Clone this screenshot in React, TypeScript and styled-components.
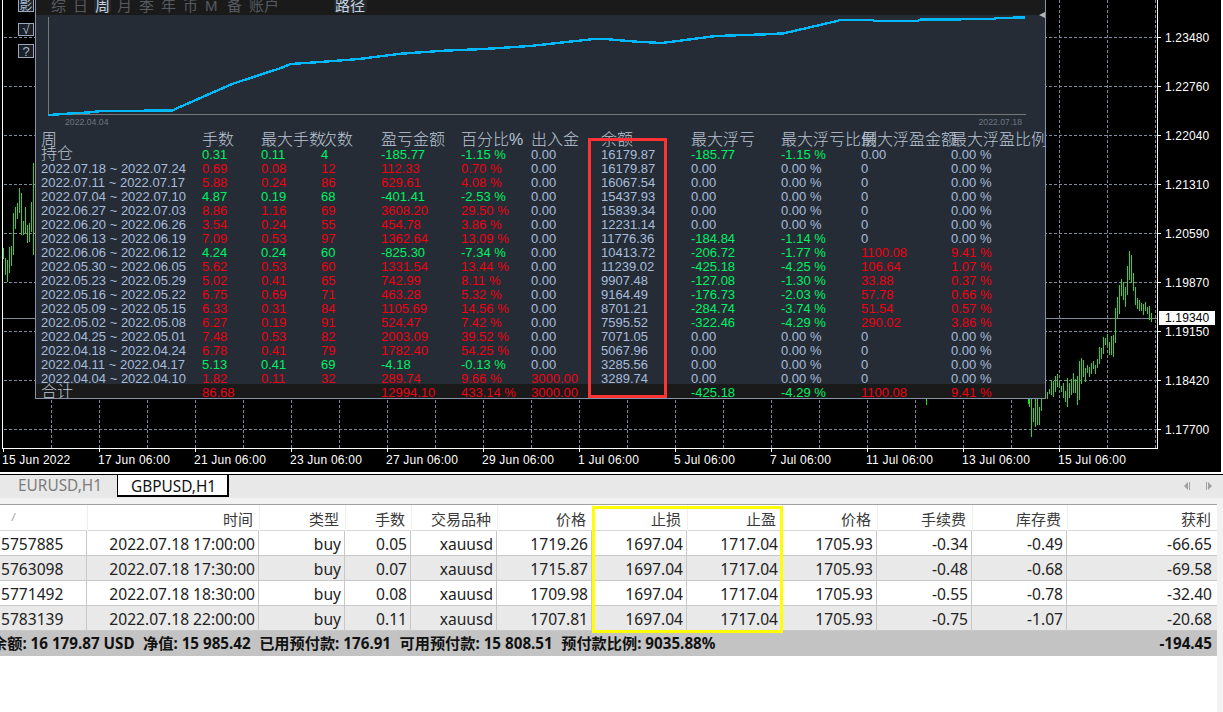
import React from 'react';
import styled, { createGlobalStyle } from 'styled-components';

const CJK = `"Liberation Sans", "Noto Sans CJK SC", sans-serif`;
const UI = `"Noto Sans", "Noto Sans CJK SC", sans-serif`;

const Global = createGlobalStyle`
  html, body { margin: 0; padding: 0; background: #fff; overflow: hidden; }
  * { box-sizing: border-box; }
`;

const Page = styled.div`
  width: 1223px;
  height: 712px;
  overflow: hidden;
  display: flex;
  flex-direction: column;
  background: #fff;
`;

/* ---------- chart ---------- */
const ChartFrame = styled.section`
  position: relative;
  width: 1221px;
  height: 472px;
  flex: none;
  background: #000;
  overflow: hidden;
  display: grid;
  grid-template-columns: 1157px 64px;
  grid-template-rows: 448px 24px;
  font-family: "Liberation Sans", sans-serif;
  color: #fff;
`;
const ChartCanvas = styled.svg`
  position: absolute;
  inset: 0;
  display: block;
`;
const PriceAxis = styled.div`
  grid-column: 2;
  grid-row: 1;
  position: relative;
  display: flex;
  flex-direction: column;
  padding: 14px 0 0 8px;
`;
const PriceLabel = styled.span`
  height: 49px;
  line-height: 49px;
  font-size: 12px;
  letter-spacing: 0.15px;
`;
const PriceTag = styled.span`
  position: absolute;
  left: 2px;
  top: 311px;
  width: 56px;
  height: 14px;
  padding-left: 6px;
  line-height: 14px;
  font-size: 12px;
  letter-spacing: 0.15px;
  background: #fff;
  color: #000;
`;
const TimeAxis = styled.div`
  grid-column: 1 / 3;
  grid-row: 2;
  position: relative;
  display: flex;
  padding: 5px 0 0 2px;
`;
const TimeLabel = styled.span`
  flex: none;
  width: 96px;
  line-height: 15px;
  font-size: 12px;
  letter-spacing: 0.22px;
  white-space: nowrap;
`;
const ToolButton = styled.span<{ $top: number; $height: number }>`
  position: absolute;
  left: 18px;
  top: ${p => p.$top}px;
  width: 16px;
  height: ${p => p.$height}px;
  border: 1px solid #9aa8bc;
  display: flex;
  align-items: center;
  justify-content: center;
  overflow: hidden;
  font: 13px/13px ${CJK};
  color: #a9b8cc;
  background: #1c2026;
`;

/* ---------- statistics panel ---------- */
const Panel = styled.div`
  position: absolute;
  left: 35px;
  top: 0;
  width: 1011px;
  height: 399px;
  background: #252c35;
  border: 1px solid #8593a8;
  border-top: 0;
  overflow: hidden;
  font-family: "Liberation Sans", sans-serif;
`;
const PeriodBar = styled.div`
  height: 15px;
  background: #1a1a1a;
  display: flex;
  padding-left: 14px;
  overflow: hidden;
`;
const PeriodTab = styled.span<{ $active?: boolean; $wide?: boolean; $gap?: number }>`
  flex: none;
  width: ${p => (p.$wide ? 33 : 17)}px;
  margin-left: ${p => p.$gap ?? 0}px;
  margin-right: 5px;
  height: 13px;
  padding-left: 1px;
  overflow: hidden;
  font: 15px/11px ${CJK};
  white-space: nowrap;
  color: ${p => (p.$active ? '#c6d0de' : '#565a60')};
  background: ${p => (p.$active ? '#23282f' : 'transparent')};
  border-radius: 0 0 3px 3px;
`;
const Graph = styled.div`
  height: 118px;
`;
const GraphSvg = styled.svg`
  display: block;
`;
const GraphDates = styled.div`
  height: 16px;
  display: flex;
  justify-content: space-between;
  padding: 0 23px 0 29px;
  font-size: 8.7px;
  line-height: 12px;
  color: #6d7580;
`;
const StatRow = styled.div<{ $total?: boolean }>`
  display: grid;
  grid-template-columns: 161px 59px 60px 60px 80px 70px 70px 90px 90px 80px 90px 90px;
  height: 14px;
  padding-left: 5px;
  ${p => p.$total && 'background: #1a1a1a; margin-top: -1px; padding-top: 1px; height: 15px;'}
`;
const StatCell = styled.span<{ $tone?: 'up' | 'down' | 'plain' }>`
  white-space: nowrap;
  font-size: 13px;
  line-height: 16px;
  color: ${p => (p.$tone === 'up' ? '#00f064' : p.$tone === 'down' ? '#ee0012' : '#a8bcdc')};
`;
const HeadCell = styled.span`
  white-space: nowrap;
  font: 300 16px/14px ${CJK};
  color: #bcc7d6;
`;
const RedFrame = styled.div`
  position: absolute;
  left: 552px;
  top: 138px;
  width: 79px;
  height: 260px;
  border: 3px solid #ff3333;
`;
const ResizeGrip = styled.span`
  position: absolute;
  right: 0;
  top: 12px;
  width: 6px;
  height: 6px;
  background: #b5b5b5;
  clip-path: polygon(100% 0, 100% 100%, 0 50%);
`;

/* ---------- terminal ---------- */
const TabBar = styled.div`
  margin-top: 2px;
  height: 24px;
  flex: none;
  border-top: 1px solid #000;
  background: #e8e8e8;
  display: flex;
  align-items: flex-start;
  font: 15.4px/22px ${UI};
  position: relative;
`;
const Tab = styled.div<{ $active?: boolean }>`
  height: ${p => (p.$active ? 23 : 22)}px;
  margin-top: ${p => (p.$active ? -1 : 0)}px;
  padding: ${p => (p.$active ? '1px 0 0 13px' : '0 0 0 18px')};
  width: ${p => (p.$active ? 112 : 117)}px;
  color: ${p => (p.$active ? '#111' : '#7c7c7c')};
  background: ${p => (p.$active ? '#fff' : 'transparent')};
  white-space: nowrap;
  ${p => p.$active && 'border: 1px solid #000; border-right-width: 2px; border-bottom-width: 2px;'}
`;
const TabArrows = styled.svg`
  position: absolute;
  right: 9px;
  top: 5px;
`;
const TerminalBody = styled.div`
  flex: 1;
  background: #f2f2f2;
  padding: 6px 6px 0 0;
  display: flex;
`;
const TradeTable = styled.div`
  position: relative;
  width: 1217px;
  background: #fff;
  border-top: 1px solid #a0a0a0;
  overflow: hidden;
  font-family: ${UI};
  color: #222;
`;
const columns = '87px 172px 86px 66px 86px 95px 95px 95px 95px 95px 95px 150px';
const TradeHead = styled.div`
  display: grid;
  grid-template-columns: ${columns};
  height: 26px;
  border-bottom: 1px solid #d6d6d6;
`;
const TradeHeadCell = styled.span`
  text-align: right;
  padding-right: 6px;
  font: 15px/27px "Noto Sans CJK SC", sans-serif;
  color: #3a3a3a;
  border-left: 1px solid #efefef;
  overflow: hidden;
`;
const SortMark = styled.span`
  padding-left: 12px;
  font: italic 10px/26px "Liberation Sans", sans-serif;
  color: #888;
`;
const TradeRow = styled.div<{ $odd: boolean }>`
  display: grid;
  grid-template-columns: ${columns};
  height: 25px;
  background: ${p => (p.$odd ? '#e9e9e9' : '#fff')};
  border-bottom: 1px solid #c8c8c8;
`;
const TradeCell = styled.span<{ $first?: boolean }>`
  text-align: ${p => (p.$first ? 'left' : 'right')};
  padding: ${p => (p.$first ? '0 0 0 1px' : '0 3px 0 0')};
  font-size: 15.6px;
  line-height: 26px;
  border-right: 1px solid #c8c8c8;
  white-space: nowrap;
  overflow: hidden;
`;
const LastTradeCell = styled(TradeCell)`
  padding-right: 5px;
  border-right: 0;
`;
const Summary = styled.div`
  height: 25px;
  background: #c3c3c3;
  display: flex;
  align-items: center;
  font: 700 15.2px/25px ${UI};
  color: #111;
  white-space: nowrap;
  overflow: hidden;
  padding-right: 5px;
`;
const SummaryItems = styled.div`
  flex: 1;
  display: flex;
  gap: 8.5px;
  margin-left: -8px;
`;
const YellowFrame = styled.div`
  position: absolute;
  left: 592px;
  top: 1px;
  width: 191px;
  height: 127px;
  border: 3px solid #ffff00;
`;

/* ---------- data ---------- */
const prices = ['1.23480', '1.22760', '1.22040', '1.21310', '1.20590', '1.19870', '1.19150', '1.18420', '1.17700'];
const times = ['15 Jun 2022', '17 Jun 06:00', '21 Jun 06:00', '23 Jun 06:00', '27 Jun 06:00', '29 Jun 06:00', '1 Jul 06:00', '5 Jul 06:00', '7 Jul 06:00', '11 Jul 06:00', '13 Jul 06:00', '15 Jul 06:00'];

const leftBars: [number, number, number][] = [
  [3, 248, 259], [5, 258, 275], [7, 260, 282], [9, 247, 273], [11, 246, 266], [13, 213, 255], [15, 207, 229], [17, 203, 219], [19, 188, 213], [21, 193, 235], [23, 221, 235], [25, 207, 233], [27, 225, 243], [29, 223, 242], [31, 202, 232], [33, 163, 255],
];
const rightRaw: [number, number, number][] = [
  [4, 475, 590], [10, 505, 545], [16, 475, 560], [22, 475, 555], [28, 500, 555], [34, 475, 512], [52, 455, 478], [58, 447, 462], [64, 423, 465], [70, 423, 470], [76, 408, 455], [82, 402, 440], [88, 425, 445], [94, 437, 455], [100, 430, 473], [106, 452, 485], [112, 415, 500], [118, 430, 473], [124, 418, 465], [130, 400, 460], [136, 418, 458], [142, 407, 495], [148, 362, 480], [154, 354, 432], [160, 360, 410], [166, 385, 425], [172, 375, 400], [178, 382, 410], [184, 368, 402], [190, 363, 387], [196, 375, 402], [202, 358, 385], [208, 320, 372], [214, 325, 358], [220, 290, 342], [226, 295, 315], [232, 282, 315], [238, 305, 345], [244, 288, 345], [250, 285, 350], [256, 205, 308], [262, 170, 235], [268, 135, 222], [274, 118, 168], [280, 127, 180], [286, 140, 202], [292, 78, 165], [298, 33, 120], [304, 45, 128], [310, 98, 152], [316, 140, 195], [322, 175, 207], [328, 180, 212], [334, 190, 214], [340, 192, 225], [346, 186, 212], [352, 200, 222], [358, 197, 240], [364, 220, 246],
];
const rightBars: [number, number, number][] = rightRaw.map(([x, a, b]) => [1030 + Math.floor(x / 3), 240 + Math.round(a / 3), 240 + Math.round(b / 3)]);
const extraBars: [number, number, number][] = [[926, 398, 405], [1028, 398, 404], [1029, 398, 407]];

const graphPoints: [number, number][] = [
  [48, 115], [56, 114.5], [70, 113.5], [88, 112.5], [102, 111], [172, 110.5], [232, 84], [280, 68.3], [291, 64], [316, 62.3], [359, 59], [401, 53.7], [444, 50.7], [484, 49], [530, 46], [576, 41], [594, 39], [605, 39], [637, 41.7], [662, 43], [716, 36], [766, 34.3], [784, 33.3], [837, 21], [840, 20], [872, 20], [874, 20.7], [918, 20.7], [920, 19.7], [994, 19], [996, 18], [1025, 17.5],
];

type Tone = 'up' | 'down';
interface WeekRow {
  period: string; tone: Tone; lots: string; maxLots: string; count: string; pnl: string; pct: string; flow?: string; balance: string; loss?: string; lossPct?: string; gain?: string; gainPct?: string;
}
const weeks: WeekRow[] = [
  { period: '2022.07.18 ~ 2022.07.24', tone: 'down', lots: '0.69', maxLots: '0.08', count: '12', pnl: '112.33', pct: '0.70 %', balance: '16179.87' },
  { period: '2022.07.11 ~ 2022.07.17', tone: 'down', lots: '5.88', maxLots: '0.24', count: '86', pnl: '629.61', pct: '4.08 %', balance: '16067.54' },
  { period: '2022.07.04 ~ 2022.07.10', tone: 'up', lots: '4.87', maxLots: '0.19', count: '68', pnl: '-401.41', pct: '-2.53 %', balance: '15437.93' },
  { period: '2022.06.27 ~ 2022.07.03', tone: 'down', lots: '8.86', maxLots: '1.16', count: '69', pnl: '3608.20', pct: '29.50 %', balance: '15839.34' },
  { period: '2022.06.20 ~ 2022.06.26', tone: 'down', lots: '3.54', maxLots: '0.24', count: '55', pnl: '454.78', pct: '3.86 %', balance: '12231.14' },
  { period: '2022.06.13 ~ 2022.06.19', tone: 'down', lots: '7.09', maxLots: '0.53', count: '97', pnl: '1362.64', pct: '13.09 %', balance: '11776.36', loss: '-184.84', lossPct: '-1.14 %' },
  { period: '2022.06.06 ~ 2022.06.12', tone: 'up', lots: '4.24', maxLots: '0.24', count: '60', pnl: '-825.30', pct: '-7.34 %', balance: '10413.72', loss: '-206.72', lossPct: '-1.77 %', gain: '1100.08', gainPct: '9.41 %' },
  { period: '2022.05.30 ~ 2022.06.05', tone: 'down', lots: '5.62', maxLots: '0.53', count: '60', pnl: '1331.54', pct: '13.44 %', balance: '11239.02', loss: '-425.18', lossPct: '-4.25 %', gain: '106.64', gainPct: '1.07 %' },
  { period: '2022.05.23 ~ 2022.05.29', tone: 'down', lots: '5.02', maxLots: '0.41', count: '65', pnl: '742.99', pct: '8.11 %', balance: '9907.48', loss: '-127.08', lossPct: '-1.30 %', gain: '33.88', gainPct: '0.37 %' },
  { period: '2022.05.16 ~ 2022.05.22', tone: 'down', lots: '6.75', maxLots: '0.69', count: '71', pnl: '463.28', pct: '5.32 %', balance: '9164.49', loss: '-176.73', lossPct: '-2.03 %', gain: '57.78', gainPct: '0.66 %' },
  { period: '2022.05.09 ~ 2022.05.15', tone: 'down', lots: '6.33', maxLots: '0.31', count: '84', pnl: '1105.69', pct: '14.56 %', balance: '8701.21', loss: '-284.74', lossPct: '-3.74 %', gain: '51.54', gainPct: '0.57 %' },
  { period: '2022.05.02 ~ 2022.05.08', tone: 'down', lots: '6.27', maxLots: '0.19', count: '91', pnl: '524.47', pct: '7.42 %', balance: '7595.52', loss: '-322.46', lossPct: '-4.29 %', gain: '290.02', gainPct: '3.86 %' },
  { period: '2022.04.25 ~ 2022.05.01', tone: 'down', lots: '7.48', maxLots: '0.53', count: '82', pnl: '2003.09', pct: '39.52 %', balance: '7071.05' },
  { period: '2022.04.18 ~ 2022.04.24', tone: 'down', lots: '6.78', maxLots: '0.41', count: '79', pnl: '1782.40', pct: '54.25 %', balance: '5067.96' },
  { period: '2022.04.11 ~ 2022.04.17', tone: 'up', lots: '5.13', maxLots: '0.41', count: '69', pnl: '-4.18', pct: '-0.13 %', balance: '3285.56' },
  { period: '2022.04.04 ~ 2022.04.10', tone: 'down', lots: '1.82', maxLots: '0.11', count: '32', pnl: '289.74', pct: '9.66 %', flow: '3000.00', balance: '3289.74' },
];

const statHeads = ['周', '手数', '最大手数', '次数', '盈亏金额', '百分比%', '出入金', '余额', '最大浮亏', '最大浮亏比例', '最大浮盈金额', '最大浮盈比例'];

const tradeHeads = ['时间', '类型', '手数', '交易品种', '价格', '止损', '止盈', '价格', '手续费', '库存费', '获利'];
const trades = [
  ['5757885', '2022.07.18 17:00:00', 'buy', '0.05', 'xauusd', '1719.26', '1697.04', '1717.04', '1705.93', '-0.34', '-0.49', '-66.65'],
  ['5763098', '2022.07.18 17:30:00', 'buy', '0.07', 'xauusd', '1715.87', '1697.04', '1717.04', '1705.93', '-0.48', '-0.68', '-69.58'],
  ['5771492', '2022.07.18 18:30:00', 'buy', '0.08', 'xauusd', '1709.98', '1697.04', '1717.04', '1705.93', '-0.55', '-0.78', '-32.40'],
  ['5783139', '2022.07.18 22:00:00', 'buy', '0.11', 'xauusd', '1707.81', '1697.04', '1717.04', '1705.93', '-0.75', '-1.07', '-20.68'],
];
const summary = ['余额: 16 179.87 USD', '净值: 15 985.42', '已用预付款: 176.91', '可用预付款: 15 808.51', '预付款比例: 9035.88%'];

const periodTabs = ['综', '日', '周', '月', '季', '年', '币', 'M', '备'];

function ChartDrawing() {
  const hLines = prices.map((_, i) => 37 + i * 49);
  const vLines = Array.from({ length: 24 }, (_, i) => 51 + i * 48);
  const ticks = times.map((_, i) => 3 + i * 96);
  const bars = [...leftBars, ...rightBars, ...extraBars];
  return (
    <ChartCanvas width={1221} height={472} shapeRendering="crispEdges">
      <g stroke="#7f8b9b" strokeWidth="1" strokeDasharray="3 2">
        {hLines.map(y => <line key={y} x1={4} x2={1157} y1={y + 0.5} y2={y + 0.5} />)}
        {vLines.map(x => <line key={x} x1={x + 0.5} x2={x + 0.5} y1={0} y2={448} />)}
      </g>
      <line x1={3} x2={1157} y1={318.5} y2={318.5} stroke="#7f8b9b" />
      <g stroke="#22dd22" strokeWidth="1">
        {bars.map(([x, a, b], i) => <line key={i} x1={x + 0.5} x2={x + 0.5} y1={a} y2={b} />)}
      </g>
      <g stroke="#fff" strokeWidth="1">
        <line x1={2.5} x2={2.5} y1={0} y2={449} />
        <line x1={1157.5} x2={1157.5} y1={0} y2={449} />
        <line x1={2} x2={1158} y1={448.5} y2={448.5} />
        {hLines.map(y => <line key={y} x1={1158} x2={1161} y1={y + 0.5} y2={y + 0.5} />)}
        {ticks.map(x => <line key={x} x1={x + 0.5} x2={x + 0.5} y1={449} y2={452} />)}
      </g>
    </ChartCanvas>
  );
}

function EquityGraph() {
  return (
    <GraphSvg width={1009} height={101} shapeRendering="crispEdges">
      <path d="M12.5 2V99.5H989.5" fill="none" stroke="#777" />
      <polyline
        points={graphPoints.map(([x, y]) => `${x - 36},${y - 15}`).join(' ')}
        fill="none"
        stroke="#00b8fa"
        strokeWidth="2.4"
      />
    </GraphSvg>
  );
}

function StatisticsPanel() {
  return (
    <Panel>
      <PeriodBar>
        {periodTabs.map(t => <PeriodTab key={t} $active={t === '周'}>{t}</PeriodTab>)}
        <PeriodTab $wide>账户</PeriodTab>
        <PeriodTab $wide $active $gap={48}>路径</PeriodTab>
      </PeriodBar>
      <Graph>
        <EquityGraph />
        <GraphDates><span>2022.04.04</span><span>2022.07.18</span></GraphDates>
      </Graph>
      <StatRow>
        {statHeads.map(h => <HeadCell key={h}>{h}</HeadCell>)}
      </StatRow>
      <StatRow>
        <HeadCell>持仓</HeadCell>
        <StatCell $tone="up">0.31</StatCell>
        <StatCell $tone="up">0.11</StatCell>
        <StatCell $tone="up">4</StatCell>
        <StatCell $tone="up">-185.77</StatCell>
        <StatCell $tone="up">-1.15 %</StatCell>
        <StatCell>0.00</StatCell>
        <StatCell>16179.87</StatCell>
        <StatCell $tone="up">-185.77</StatCell>
        <StatCell $tone="up">-1.15 %</StatCell>
        <StatCell>0.00</StatCell>
        <StatCell>0.00 %</StatCell>
      </StatRow>
      {weeks.map(w => (
        <StatRow key={w.period}>
          <StatCell>{w.period}</StatCell>
          <StatCell $tone={w.tone}>{w.lots}</StatCell>
          <StatCell $tone={w.tone}>{w.maxLots}</StatCell>
          <StatCell $tone={w.tone}>{w.count}</StatCell>
          <StatCell $tone={w.tone}>{w.pnl}</StatCell>
          <StatCell $tone={w.tone}>{w.pct}</StatCell>
          <StatCell $tone={w.flow ? 'down' : 'plain'}>{w.flow ?? '0.00'}</StatCell>
          <StatCell>{w.balance}</StatCell>
          <StatCell $tone={w.loss ? 'up' : 'plain'}>{w.loss ?? '0.00'}</StatCell>
          <StatCell $tone={w.lossPct ? 'up' : 'plain'}>{w.lossPct ?? '0.00 %'}</StatCell>
          <StatCell $tone={w.gain ? 'down' : 'plain'}>{w.gain ?? '0'}</StatCell>
          <StatCell $tone={w.gainPct ? 'down' : 'plain'}>{w.gainPct ?? '0.00 %'}</StatCell>
        </StatRow>
      ))}
      <StatRow $total>
        <HeadCell>合计</HeadCell>
        <StatCell $tone="down">86.68</StatCell>
        <StatCell />
        <StatCell />
        <StatCell $tone="down">12994.10</StatCell>
        <StatCell $tone="down">433.14 %</StatCell>
        <StatCell $tone="down">3000.00</StatCell>
        <StatCell />
        <StatCell $tone="up">-425.18</StatCell>
        <StatCell $tone="up">-4.29 %</StatCell>
        <StatCell $tone="down">1100.08</StatCell>
        <StatCell $tone="down">9.41 %</StatCell>
      </StatRow>
      <RedFrame />
      <ResizeGrip />
    </Panel>
  );
}

function TradeList() {
  return (
    <TradeTable>
      <TradeHead>
        <SortMark>/</SortMark>
        {tradeHeads.map((h, i) => <TradeHeadCell key={i}>{h}</TradeHeadCell>)}
      </TradeHead>
      {trades.map((row, r) => (
        <TradeRow key={row[0]} $odd={r % 2 === 1}>
          {row.map((v, i) =>
            i === row.length - 1
              ? <LastTradeCell key={i}>{v}</LastTradeCell>
              : <TradeCell key={i} $first={i === 0}>{v}</TradeCell>
          )}
        </TradeRow>
      ))}
      <Summary>
        <SummaryItems>
          {summary.map(s => <span key={s}>{s}</span>)}
        </SummaryItems>
        <span>-194.45</span>
      </Summary>
      <YellowFrame />
    </TradeTable>
  );
}

export default function App() {
  return (
    <Page>
      <Global />
      <ChartFrame>
        <ChartDrawing />
        <PriceAxis>
          {prices.map(p => <PriceLabel key={p}>{p}</PriceLabel>)}
          <PriceTag>1.19340</PriceTag>
        </PriceAxis>
        <TimeAxis>
          {times.map(t => <TimeLabel key={t}>{t}</TimeLabel>)}
        </TimeAxis>
        <ToolButton $top={-3} $height={15}>影</ToolButton>
        <ToolButton $top={23} $height={13}>√</ToolButton>
        <ToolButton $top={44} $height={14}>?</ToolButton>
        <StatisticsPanel />
      </ChartFrame>
      <TabBar>
        <Tab>EURUSD,H1</Tab>
        <Tab $active>GBPUSD,H1</Tab>
        <TabArrows width={32} height={12} viewBox="0 0 32 12">
          <path d="M6 2V10L2 6Z M7 2H8V10H7Z" fill="#a0a0a0" />
          <path d="M26 2V10L30 6Z M24 2H25V10H24Z" fill="#a0a0a0" />
        </TabArrows>
      </TabBar>
      <TerminalBody>
        <TradeList />
      </TerminalBody>
    </Page>
  );
}
